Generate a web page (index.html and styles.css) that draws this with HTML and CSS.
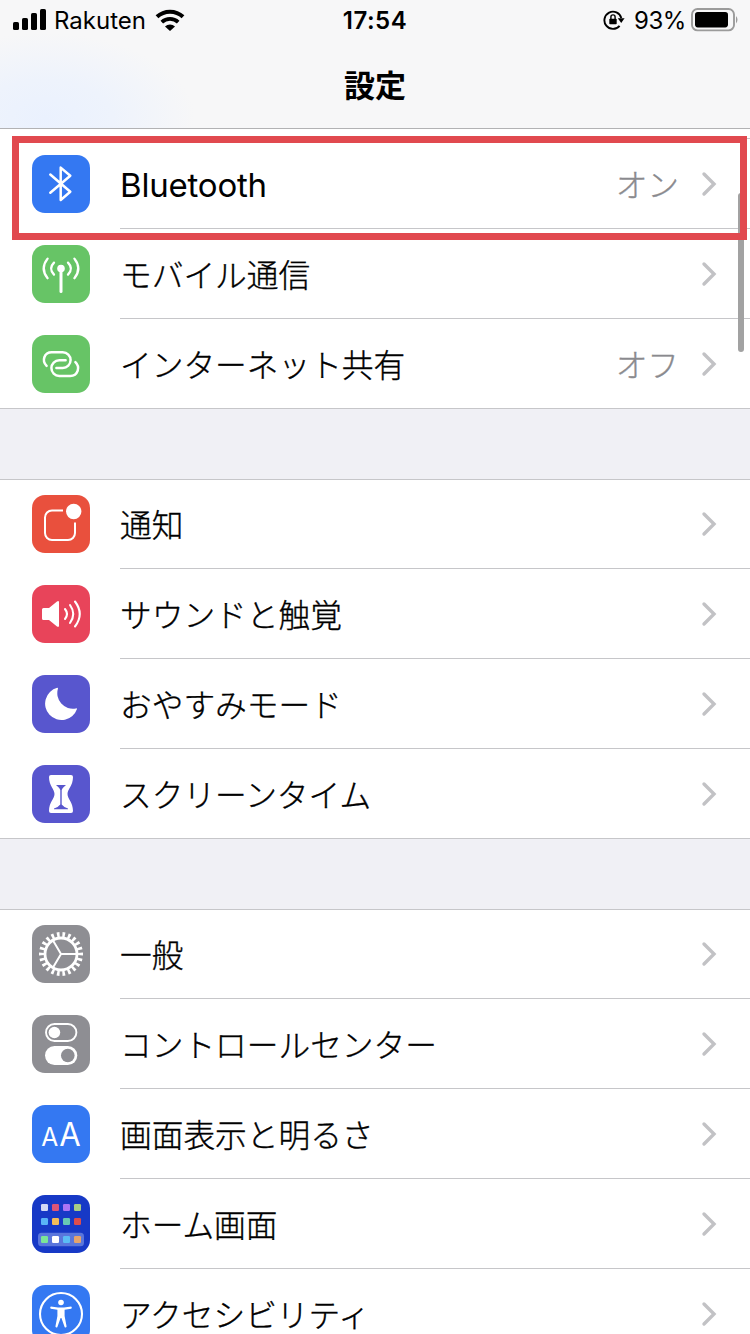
FILE: index.html
```html
<!DOCTYPE html>
<html lang="ja">
<head>
<meta charset="utf-8">
<title>設定</title>
<link rel="stylesheet" href="styles.css">
</head>
<body>
<svg width="0" height="0" class="defs"><symbol id="chev" viewBox="0 0 16 26"><path d="M3 3 L13 13 L3 23" fill="none" stroke="#c2c2c5" stroke-width="3.4" stroke-linecap="round" stroke-linejoin="miter"/></symbol></svg>
<div class="screen">
  <header class="header">
    <div class="status">
      <div class="status-left">
        <svg width="34" height="22" viewBox="0 0 34 22"><rect x="0" y="13" width="6" height="8" rx="1.6"/><rect x="9" y="9" width="6" height="12" rx="1.6"/><rect x="18" y="4" width="6" height="17" rx="1.6"/><rect x="27" y="0" width="6" height="21" rx="1.6"/></svg>
        <span class="carrier">Rakuten</span>
        <svg class="wifi" width="30" height="22" viewBox="0 0 30 22"><path d="M2 7.8 A19 19 0 0 1 28 7.8" fill="none" stroke="#000" stroke-width="4"/><path d="M6.8 13.2 A12 12 0 0 1 23.2 13.2" fill="none" stroke="#000" stroke-width="3.8"/><path d="M15 22 L10 17.4 A7.5 7.5 0 0 1 20 17.4 Z"/></svg>
      </div>
      <div class="time">17:54</div>
      <div class="status-right">
        <svg width="22" height="20" viewBox="0 0 22 20"><path d="M16.6 15.8 A8.6 8.6 0 1 1 18.3 8" fill="none" stroke="#000" stroke-width="1.9"/><path d="M14.8 8.3 H21.6 L18.2 13 Z"/><rect x="6.3" y="8.7" width="7.4" height="5.6" rx=".8"/><path d="M7.9 9 V7 a2.1 2.1 0 0 1 4.2 0 V9" fill="none" stroke="#000" stroke-width="1.4"/></svg>
        <span class="percent">93%</span>
        <svg class="battery" width="48" height="24" viewBox="0 0 48 24"><rect x="1" y="1" width="42" height="21.4" rx="5.5" fill="none" stroke="#9b9b9b" stroke-width="1.9"/><rect x="4" y="4" width="33" height="15.4" rx="2.8"/><path d="M45 8 q3 3.7 0 7.4 Z" fill="#9b9b9b"/></svg>
      </div>
    </div>
    <h1 class="title">設定</h1>
  </header>

  <main>
    <section class="group first">
      <div class="peek"></div>
      <div class="row">
        <svg class="icon blue" viewBox="0 0 58 58"><path d="M18.3 19.5 L38.3 36.8 L28.7 45 V12.6 L38.3 20.7 L18.3 37.8" class="line" stroke-width="2.5"/></svg>
        <div class="cell"><span class="label latin">Bluetooth</span><span class="value">オン</span><svg class="chev"><use href="#chev"/></svg></div>
      </div>
      <div class="row">
        <svg class="icon green" viewBox="0 0 58 58"><circle cx="29" cy="23.5" r="3.8" fill="#fff"/><path d="M29 24 V46.5" class="line" stroke-width="3"/><path d="M22 17.6 Q16.2 23.5 22 29.6 M36 17.6 Q41.8 23.5 36 29.6 M15.6 13.6 Q7.8 23.5 15.6 33.2 M42.4 13.6 Q50.2 23.5 42.4 33.2" class="line" stroke-width="2.3"/></svg>
        <div class="cell"><span class="label">モバイル通信</span><svg class="chev"><use href="#chev"/></svg></div>
      </div>
      <div class="row">
        <svg class="icon green" viewBox="0 0 58 58"><path d="M14.6 30.8 C9.5 26 12 17.3 19.8 17.3 H30.8 a7.8 7.8 0 0 1 0 15.6 H24.4 M43.4 27.2 C48.5 32 46 40.9 38.2 40.9 H27.2 a7.8 7.8 0 0 1 0 -15.6 H33.6" class="line" stroke-width="2.5"/></svg>
        <div class="cell"><span class="label">インターネット共有</span><span class="value">オフ</span><svg class="chev"><use href="#chev"/></svg></div>
      </div>
    </section>

    <section class="group">
      <div class="row">
        <svg class="icon orange" viewBox="0 0 58 58"><path d="M31 15.4 H20 a7 7 0 0 0 -7 7 V38 a7 7 0 0 0 7 7 H36 a7 7 0 0 0 7 -7 V27.5" class="line butt" stroke-width="2"/><circle cx="41.7" cy="16.5" r="7.7" fill="#fff"/></svg>
        <div class="cell"><span class="label">通知</span><svg class="chev"><use href="#chev"/></svg></div>
      </div>
      <div class="row">
        <svg class="icon pink" viewBox="0 0 58 58"><path d="M11.5 23 H17 L25 16.5 Q27 15.3 27 17.5 V40.5 Q27 42.7 25 41.5 L17 35 H11.5 Q10 35 10 33.5 V24.5 Q10 23 11.5 23Z" fill="#fff"/><path d="M33 24 Q37 29 33 34 M38 20 Q44.5 29 38 38 M43 16.5 Q52.5 29 43 41.5" class="line" stroke-width="2.1"/></svg>
        <div class="cell"><span class="label">サウンドと触覚</span><svg class="chev"><use href="#chev"/></svg></div>
      </div>
      <div class="row">
        <svg class="icon purple" viewBox="0 0 58 58"><path d="M25.2 12.8 A16.4 16.4 0 1 0 45 34 Q45 33 43.8 33.4 A15.5 15.5 0 0 1 26 13.6 Q26 12.7 25.2 12.8Z" fill="#fff"/></svg>
        <div class="cell"><span class="label">おやすみモード</span><svg class="chev"><use href="#chev"/></svg></div>
      </div>
      <div class="row">
        <svg class="icon purple" viewBox="0 0 58 58"><path d="M19 10 H39 Q41 10 41 12 C41 21 35.5 24 35.5 29 C35.5 34 41 37 41 46 Q41 48 39 48 H19 Q17 48 17 46 C17 37 22.5 34 22.5 29 C22.5 24 17 21 17 12 Q17 10 19 10Z" fill="#fff"/><path d="M24 20 H34 Q30.8 22.5 29.7 25 V39.5 Q31.5 42 36 43.5 V44.3 H22 V43.5 Q26.5 42 28.3 39.5 V25 Q27.2 22.5 24 20Z" fill="#5856ce"/></svg>
        <div class="cell"><span class="label">スクリーンタイム</span><svg class="chev"><use href="#chev"/></svg></div>
      </div>
    </section>

    <section class="group">
      <div class="row">
        <svg class="icon gray" viewBox="0 0 58 58"><circle cx="29" cy="29" r="16" class="line" stroke-width="2.8"/><circle cx="29" cy="29" r="19.3" class="line butt" stroke-width="5.4" pathLength="44" stroke-dasharray=".95 1.05" stroke-dashoffset=".475"/><path d="M29 29 H44 M29 29 L21.3 16 M29 29 L21.3 42" class="line" stroke-width="2"/></svg>
        <div class="cell"><span class="label">一般</span><svg class="chev"><use href="#chev"/></svg></div>
      </div>
      <div class="row">
        <svg class="icon gray" viewBox="0 0 58 58"><rect x="14" y="9" width="30.4" height="17" rx="8.5" class="line" stroke-width="1.9"/><circle cx="22.4" cy="17.5" r="5.8" fill="#fff"/><rect x="13" y="31" width="32.3" height="19" rx="9.5" fill="#fff"/><circle cx="35.8" cy="40.5" r="6.8" fill="#8e8e93"/></svg>
        <div class="cell"><span class="label">コントロールセンター</span><svg class="chev"><use href="#chev"/></svg></div>
      </div>
      <div class="row">
        <svg class="icon blue" viewBox="0 0 58 58"><g class="aa"><text x="9.3" y="40.7" font-size="25" textLength="17" lengthAdjust="spacingAndGlyphs">A</text><text x="27.3" y="40.7" font-size="32.5" textLength="21.5" lengthAdjust="spacingAndGlyphs">A</text></g></svg>
        <div class="cell"><span class="label">画面表示と明るさ</span><svg class="chev"><use href="#chev"/></svg></div>
      </div>
      <div class="row">
        <svg class="icon navy" viewBox="0 0 58 58"><rect x="6" y="37.8" width="46" height="13.4" rx="3.5" fill="#5a76dc"/><g><rect x="9" y="9" width="7" height="7" rx="1.3" fill="#d3d9f5"/><rect x="20" y="9" width="7" height="7" rx="1.3" fill="#dd5577"/><rect x="31" y="9" width="7" height="7" rx="1.3" fill="#ab74f5"/><rect x="42" y="9" width="7" height="7" rx="1.3" fill="#a8cc85"/><rect x="9" y="23" width="7" height="7" rx="1.3" fill="#59b3f7"/><rect x="20" y="23" width="7" height="7" rx="1.3" fill="#f3bd59"/><rect x="31" y="23" width="7" height="7" rx="1.3" fill="#67c9b4"/><rect x="42" y="23" width="7" height="7" rx="1.3" fill="#dd4d4c"/><rect x="9" y="41" width="7" height="7" rx="1.3" fill="#7ce696"/><rect x="20" y="41" width="7" height="7" rx="1.3" fill="#fff"/><rect x="31" y="41" width="7" height="7" rx="1.3" fill="#5bbcf5"/><rect x="42" y="41" width="7" height="7" rx="1.3" fill="#e6a46c"/></g></svg>
        <div class="cell"><span class="label">ホーム画面</span><svg class="chev"><use href="#chev"/></svg></div>
      </div>
      <div class="row">
        <svg class="icon blue" viewBox="0 0 58 58"><circle cx="29" cy="29" r="21" class="line" stroke-width="2.1"/><circle cx="29" cy="17.5" r="2.8" fill="#fff"/><path d="M18.8 21.6 L26 22.4 H32 L39.2 21.6 Q40.6 23 39.2 23.7 L32.6 24.8 V31 L34.6 41.6 Q34 43 32.7 42.2 L29.4 33 H28.6 L25.3 42.2 Q24 43 23.4 41.6 L25.4 31 V24.8 L18.8 23.7 Q17.4 23 18.8 21.6Z" fill="#fff"/></svg>
        <div class="cell"><span class="label">アクセシビリティ</span><svg class="chev"><use href="#chev"/></svg></div>
      </div>
    </section>
  </main>
  <div class="scrollbar"></div>
  <div class="highlight"></div>
</div>
</body>
</html>
```
FILE: styles.css
```css
* { box-sizing: border-box; }
body { margin: 0; background: #f0f0f5; color: #000; font-family: Inter, "Noto Sans CJK JP", sans-serif; }
.defs { position: absolute; }
.screen { position: relative; width: 750px; height: 1334px; overflow: hidden; }
.header { height: 129px; border-bottom: 1px solid #b2b2b4; background: radial-gradient(ellipse 150px 85px at 45px 118px, #eaf1fe 0%, #eef3fc 45%, rgba(247,247,248,0) 100%), #f7f7f8; }
.status { display: grid; grid-template-columns: 1fr auto 1fr; height: 40px; align-items: center; padding: 0 10px 0 13px; }
.status-left, .status-right { display: flex; align-items: center; }
.status-right { justify-content: flex-end; }
.carrier { font-size: 24px; letter-spacing: 0; margin-left: 7px; }
.wifi { margin-left: 9px; }
.time { font-size: 24px; font-weight: 600; letter-spacing: .5px; margin-right: 3px; }
.percent { font-size: 24px; margin-left: 9px; letter-spacing: -.4px; }
.battery { margin-left: 5px; margin-right: 1px; }
.title { margin: 0; padding-top: 22px; text-align: center; font: 700 31px/44px "Noto Sans CJK JP", sans-serif; }
.group { background: #fff; border-bottom: 1px solid #c6c6c9; margin-bottom: 70px; box-shadow: inset 0 1px #c6c6c9; }
.group.first { box-shadow: none; }
.peek { height: 10px; margin-left: 120px; border-bottom: 1px solid #c6c6c9; }
.row { display: flex; height: 90px; padding-left: 32px; align-items: center; }
.row:last-child { height: 89px; }
.icon { width: 58px; height: 58px; flex: none; border-radius: 13px; margin-right: 30px; }
.row:last-child .icon { margin-top: 1px; }
.cell { flex: 1; height: 90px; display: flex; align-items: center; padding-right: 33px; border-bottom: 1px solid #c6c6c9; }
.row:last-child .cell { height: 89px; padding-top: 1px; border-bottom: 0; }
.label, .value { font-family: "Noto Sans CJK JP", sans-serif; font-size: 31.7px; font-weight: 300; line-height: 44px; padding-bottom: 2px; -webkit-text-stroke: .35px currentColor; }
.label { flex: 1; }
.label.latin { font-family: Inter, sans-serif; font-size: 33px; font-weight: 400; letter-spacing: -.2px; padding: 2px 0 0; -webkit-text-stroke: 0; }
.value { color: #8a8a8e; margin-right: 22px; }
.chev { width: 16px; height: 26px; flex: none; }
.line { fill: none; stroke: #fff; stroke-linecap: round; stroke-linejoin: round; }
.butt { stroke-linecap: butt; }
.aa { font-family: Inter, sans-serif; fill: #fff; }
.blue { background: #3478f2; }
.green { background: #67c466; }
.orange { background: #e9503d; }
.pink { background: #e8445a; }
.purple { background: #5856ce; }
.gray { background: #8e8e93; }
.navy { background: #1739c6; }
.scrollbar { position: absolute; left: 738px; top: 193px; width: 6px; height: 159px; border-radius: 3px; background: #a2a2a2; }
.highlight { position: absolute; left: 12px; top: 136px; width: 735px; height: 104px; border: 7px solid #e1494f; }
```
